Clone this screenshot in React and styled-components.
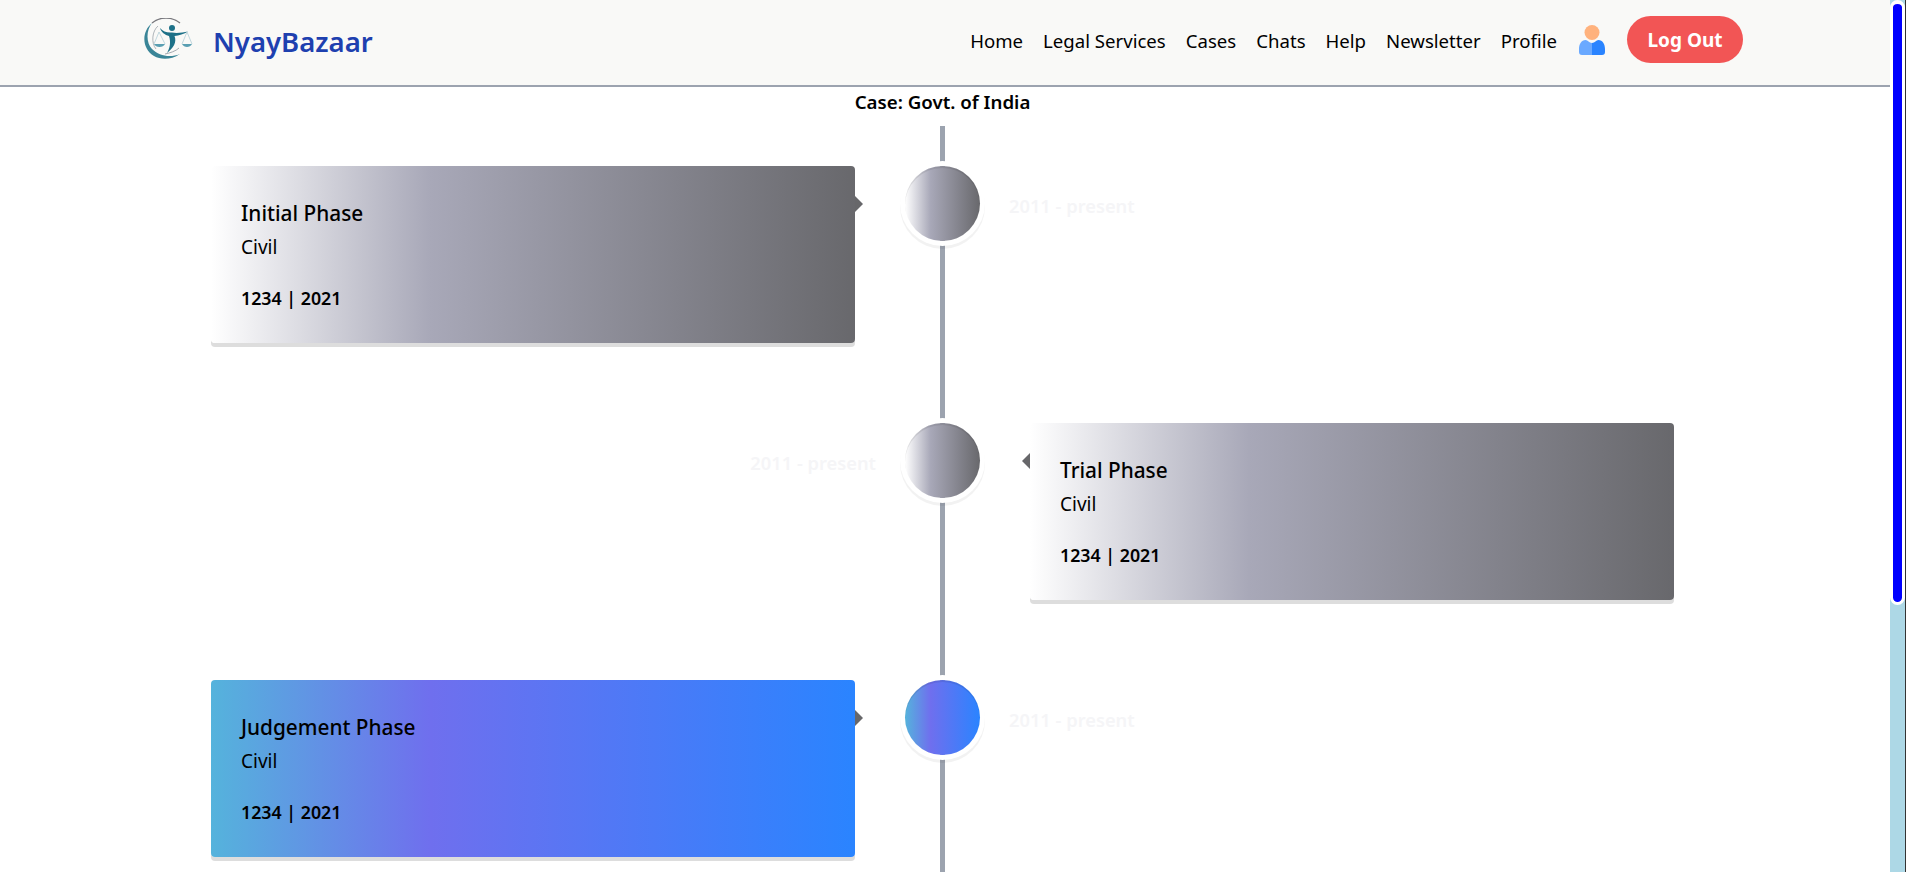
import React from "react";
import styled, { createGlobalStyle } from "styled-components";

const GlobalStyle = createGlobalStyle`
  body {
    margin: 0;
    background: #fff;
    color: #000;
    font-family: "Noto Sans", "Open Sans", sans-serif;
  }
`;

const gradients = {
  gray: "linear-gradient(to right, #fff, #a8a8b8 34%, #68686c)",
  blue: "linear-gradient(to right, #55b3dc, #6f6fee 34%, #2a84ff)",
};

const Shell = styled.div`
  display: flex;
  align-items: flex-start;
`;

const Page = styled.main`
  flex: 1;
  min-width: 0;
`;

// the page's own styled scrollbar, headless chrome hides the real one
const ScrollRail = styled.aside`
  position: sticky;
  top: 0;
  flex: none;
  width: 16px;
  height: 100vh;
  box-sizing: border-box;
  background: lightblue;
  border-right: 1px solid #333;
`;

const ScrollThumb = styled.div`
  height: 605px;
  box-sizing: border-box;
  background: blue;
  border: 3px solid #fff;
  border-top-width: 4px;
  border-radius: 8px;
`;

const Navbar = styled.header`
  height: 85px;
  box-sizing: content-box;
  border-bottom: 2px solid #9ca3af;
  background: #f9f9f7;
  padding: 0 147px 0 143px;
  display: flex;
  align-items: center;
  justify-content: space-between;
`;

const Brand = styled.div`
  display: flex;
  align-items: center;
  gap: 18px;
  margin-bottom: 6px;
`;

const BrandName = styled.span`
  margin-top: 3px;
  color: #1e40af;
  font-size: 27.5px;
  font-weight: 600;
`;

const NavLinks = styled.nav`
  display: flex;
  align-items: center;
  gap: 20px;
  margin-bottom: 6px;
`;

const NavLink = styled.a`
  margin-top: 1px;
  color: #000;
  font-size: 18.6px;
  text-decoration: none;
`;

const ProfileIcon = styled.svg`
  margin: 0 2px;
`;

const LogoutButton = styled.button`
  width: 116px;
  height: 47px;
  border: 0;
  border-radius: 24px;
  background: #f25555;
  color: #fff;
  font: 700 19px "Noto Sans", "Open Sans", sans-serif;
`;

const CaseTitle = styled.h1`
  margin: 0;
  text-align: center;
  padding-right: 5px;
  font-size: 18.7px;
  line-height: 30px;
  font-weight: 600;
`;

const Timeline = styled.section`
  position: relative;
  width: 1463px;
  margin: 9px 0 0 211px;
  padding: 40px 0 400px;

  &::before {
    content: "";
    position: absolute;
    top: 0;
    bottom: 0;
    left: 729px;
    width: 5px;
    background: #9ca3af;
  }
`;

const Row = styled.article`
  position: relative;
  display: grid;
  grid-template-columns: 665px 75px 665px;
  column-gap: 29px;
  margin-bottom: 80px;

  &:last-child {
    margin-bottom: 0;
  }
`;

const Card = styled.div`
  position: relative;
  grid-column: ${(p) => (p.$side === "left" ? 1 : 3)};
  grid-row: 1;
  margin: ${(p) => (p.$side === "left" ? "0 21px 0 0" : "0 0 0 21px")};
  height: 177px;
  box-sizing: border-box;
  padding: 33px 30px 0;
  border-radius: 4px;
  background: ${(p) => gradients[p.$tone]};
  box-shadow: 0 4px 0 #ddd;

  &::before {
    content: "";
    position: absolute;
    top: 30px;
    ${(p) => (p.$side === "left" ? "left: 100%;" : "right: 100%;")}
    border: 8px solid transparent;
    border-width: 8px ${(p) => (p.$side === "left" ? "0 8px 8px" : "8px 8px 0")};
    border-${(p) => (p.$side === "left" ? "left" : "right")}-color: #67676a;
  }
`;

const CardTitle = styled.h2`
  margin: 0;
  font-size: 20.8px;
  line-height: 28px;
  font-weight: 500;
`;

const CardType = styled.p`
  margin: 7px 0 0;
  font-size: 19px;
  line-height: 26px;
`;

const CardNumber = styled.p`
  margin: 25px 0 0;
  font-size: 17.8px;
  line-height: 26px;
  font-weight: 600;
`;

const Marker = styled.div`
  position: relative;
  grid-column: 2;
  grid-row: 1;
  width: 75px;
  height: 75px;
  border-radius: 50%;
  background: ${(p) => gradients[p.$tone]};
  box-shadow: 0 0 0 5px #fff, inset 0 2px 0 rgba(0, 0, 0, 0.08), 0 3px 0 5px rgba(0, 0, 0, 0.05);
`;

const DateLabel = styled.span`
  grid-column: ${(p) => (p.$side === "left" ? 3 : 1)};
  grid-row: 1;
  justify-self: ${(p) => (p.$side === "left" ? "start" : "end")};
  margin-top: 26px;
  color: #f5f5f7;
  font-size: 18.3px;
  line-height: 28px;
  font-weight: 600;
`;

const LogoMark = () => (
  <svg width="52" height="44" viewBox="0 0 52 44" aria-hidden="true">
    <path d="M37 5C30 -1 17 -2 9 5" fill="none" stroke="#77777c" strokeWidth="1.3" />
    <path d="M9 5C-2 14 -1 31 11 38C18 42 28 42 37 36C27 40 16 38 9 31C3 25 3 12 9 5Z" fill="#3a8597" />
    <path d="M15 8C9 13 8 25 13 31" fill="none" stroke="#9aa2a8" strokeWidth="0.8" />
    <path d="M22 36C27 35 33 33 36 30" fill="none" stroke="#9a9fa6" strokeWidth="0.9" />
    <circle cx="29" cy="10" r="3" fill="#1d7188" />
    <path d="M17 10C20 13.5 24 15 29 14.5C34 15.5 40 14.5 45 13.5C41 16 36 17.5 31.5 18C34 24 30.5 30 24 35C27 30 28 24 26 18C22 17 18 14 17 10Z" fill="#1d7188" />
    <path d="M16 14L11 26M16 14L22 26M44 14L39 26M44 14L49 26" fill="none" stroke="#a9c8d2" strokeWidth="0.7" />
    <path d="M11 26H22C21 28 19 29 16.5 29C14 29 12 28 11 26ZM39 26H49C48 28 46 29 44 29C42 29 40 28 39 26Z" fill="#5a9fb2" />
  </svg>
);

const UserIcon = () => (
  <ProfileIcon width="26" height="30" viewBox="0 0 26 30" aria-hidden="true">
    <circle cx="13" cy="7.5" r="7.5" fill="#ffb27d" />
    <path d="M13 18C10 18 9 15 6.5 15C2.5 15 0 19 0 24V27C0 29 1 30 3 30H13Z" fill="#6aa9ff" />
    <path d="M13 18C16 18 17 15 19.5 15C23.5 15 26 19 26 24V27C26 29 25 30 23 30H13Z" fill="#2a84ff" />
  </ProfileIcon>
);

const links = ["Home", "Legal Services", "Cases", "Chats", "Help", "Newsletter", "Profile"];

const phases = [
  { title: "Initial Phase", side: "left", tone: "gray" },
  { title: "Trial Phase", side: "right", tone: "gray" },
  { title: "Judgement Phase", side: "left", tone: "blue" },
];

export default function App() {
  return (
    <Shell>
      <GlobalStyle />
      <Page>
        <Navbar>
          <Brand>
            <LogoMark />
            <BrandName>NyayBazaar</BrandName>
          </Brand>
          <NavLinks>
            {links.map((link) => (
              <NavLink href="#" key={link}>
                {link}
              </NavLink>
            ))}
            <UserIcon />
            <LogoutButton>Log Out</LogoutButton>
          </NavLinks>
        </Navbar>
        <CaseTitle>Case: Govt. of India</CaseTitle>
        <Timeline>
          {phases.map((phase) => (
            <Row key={phase.title}>
              <Card $side={phase.side} $tone={phase.tone}>
                <CardTitle>{phase.title}</CardTitle>
                <CardType>Civil</CardType>
                <CardNumber>1234 | 2021</CardNumber>
              </Card>
              <Marker $tone={phase.tone} />
              <DateLabel $side={phase.side}>2011 - present</DateLabel>
            </Row>
          ))}
        </Timeline>
      </Page>
      <ScrollRail>
        <ScrollThumb />
      </ScrollRail>
    </Shell>
  );
}
